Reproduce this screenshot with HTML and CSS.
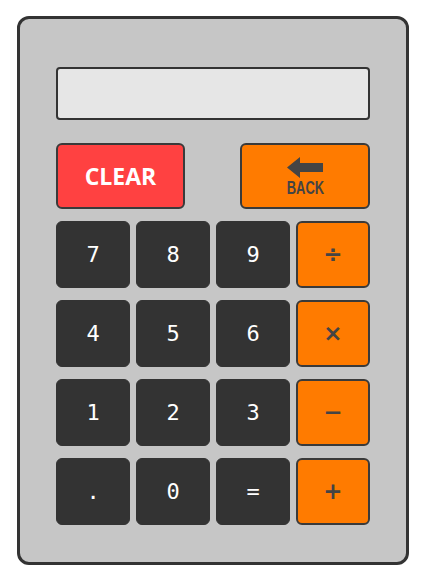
FILE: index.html
```html
<!DOCTYPE html>
<html>
<head>
<meta charset="utf-8">
<link rel="stylesheet" href="styles.css">
</head>
<body>
<div class="calc">
  <div class="display"></div>
  <div class="top-row">
    <button class="btn clear">CLEAR</button>
    <button class="btn back">
      <svg class="arrow" width="36" height="21" viewBox="0 0 36 21"><polygon points="0,10.5 13,0 13,6 36,6 36,15 13,15 13,21" fill="#444"/></svg>
      <span class="back-label">BACK</span>
    </button>
  </div>
  <div class="keys">
    <button class="btn num">7</button>
    <button class="btn num">8</button>
    <button class="btn num">9</button>
    <button class="btn op">÷</button>
    <button class="btn num">4</button>
    <button class="btn num">5</button>
    <button class="btn num">6</button>
    <button class="btn op">×</button>
    <button class="btn num">1</button>
    <button class="btn num">2</button>
    <button class="btn num">3</button>
    <button class="btn op">−</button>
    <button class="btn num">.</button>
    <button class="btn num">0</button>
    <button class="btn num">=</button>
    <button class="btn op">+</button>
  </div>
</div>
</body>
</html>
```
FILE: styles.css
```css
* { box-sizing: border-box; }
html, body { margin: 0; background: #fff; }
body { padding: 16px 19px 0 17px; }
.calc {
  width: 392px;
  height: 549px;
  background: #c6c6c6;
  border: 3px solid #333;
  border-radius: 12px;
  padding: 48px 36px 37px 36px;
  display: flex;
  flex-direction: column;
}
.display {
  height: 53px;
  background: #e6e6e6;
  border: 2px solid #333;
  border-radius: 4px;
}
.top-row {
  margin-top: 23px;
  height: 66px;
  display: flex;
  justify-content: space-between;
}
.btn {
  margin: 0;
  padding: 0;
  border-radius: 6px;
  display: flex;
  align-items: center;
  justify-content: center;
  cursor: pointer;
}
.clear {
  width: 129px;
  background: #ff4141;
  border: 2px solid #3a3a3a;
  color: #fff;
  font-family: "Open Sans", "Noto Sans", sans-serif;
  font-weight: 700;
  font-size: 23px;
  line-height: 1;
}
.back {
  width: 130px;
  background: #ff7b00;
  border: 2px solid #3a3a3a;
  flex-direction: column;
  gap: 2px;
  padding-top: 0;
}
.arrow { display: block; }
.back-label {
  display: block;
  font-family: "Liberation Sans", Arial, sans-serif;
  font-weight: 700;
  font-size: 19px;
  line-height: 15px;
  color: #444;
  transform: scaleX(0.68);
}
.keys {
  margin-top: 12px;
  display: grid;
  grid-template-columns: repeat(4, 74px);
  grid-auto-rows: 67px;
  column-gap: 6px;
  row-gap: 12px;
}
.num {
  background: #333;
  border: 1px solid #333;
  color: #fff;
  font-family: "DejaVu Sans Mono", monospace;
  font-size: 22px;
  line-height: 1;
}
.op {
  background: #ff7b00;
  border: 2px solid #3a3a3a;
  color: #444;
  font-family: "DejaVu Sans", sans-serif;
  font-weight: 700;
  font-size: 23px;
  line-height: 1;
}
```
